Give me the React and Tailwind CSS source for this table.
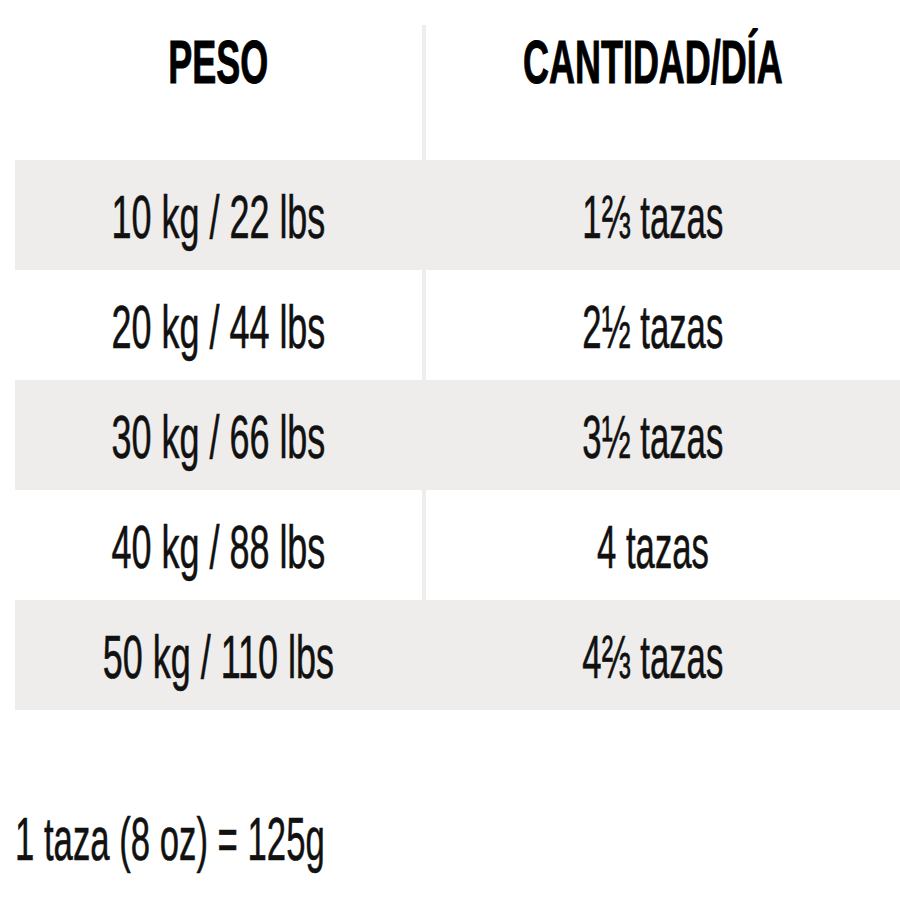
const rows = [
  { peso: '10 kg / 22 lbs', cantidad: '1⅔ tazas', shaded: true },
  { peso: '20 kg / 44 lbs', cantidad: '2½ tazas', shaded: false },
  { peso: '30 kg / 66 lbs', cantidad: '3½ tazas', shaded: true },
  { peso: '40 kg / 88 lbs', cantidad: '4 tazas', shaded: false },
  { peso: '50 kg / 110 lbs', cantidad: '4⅔ tazas', shaded: true },
]

export default function App() {
  return (
    <div className="w-[900px] h-[900px] bg-white text-black font-['Liberation_Sans',Arial,sans-serif]">
      <div className="pl-[15px] pt-[25px]">
        {/* Header */}
        <div className="grid grid-cols-[411px_454px] h-[135px]">
          <div className="border-r-4 border-[#eeeeee] flex justify-center pt-[6px]">
            <span className="inline-block text-[62px] leading-none font-bold scale-x-[0.58] [-webkit-text-stroke:1px_black]">PESO</span>
          </div>
          <div className="flex justify-center pt-[6px]">
            <span className="inline-block text-[62px] leading-none font-bold scale-x-[0.58] [-webkit-text-stroke:1px_black]">CANTIDAD/DÍA</span>
          </div>
        </div>

        {/* Rows */}
        {rows.map((row) => (
          <div
            key={row.peso}
            className={`grid grid-cols-[411px_454px] h-[110px] ${row.shaded ? 'bg-[#eeedeb]' : 'bg-white'}`}
          >
            <div className={`border-r-4 flex items-center justify-center pt-[4px] ${row.shaded ? 'border-[#eeedeb]' : 'border-[#eeeeee]'}`}>
              <span className="inline-block text-[62px] leading-none text-[#111] scale-x-[0.58] [-webkit-text-stroke:0.6px_#111]">{row.peso}</span>
            </div>
            <div className="flex items-center justify-center pt-[4px]">
              <span className="inline-block text-[62px] leading-none text-[#111] scale-x-[0.56] [-webkit-text-stroke:0.6px_#111]">{row.cantidad}</span>
            </div>
          </div>
        ))}

        {/* Footer note */}
        <div className="mt-[98px]">
          <span className="inline-block origin-left text-[62px] leading-none text-[#111] scale-x-[0.56] [-webkit-text-stroke:0.6px_#111]">1 taza (8 oz) = 125g</span>
        </div>
      </div>
    </div>
  )
}
